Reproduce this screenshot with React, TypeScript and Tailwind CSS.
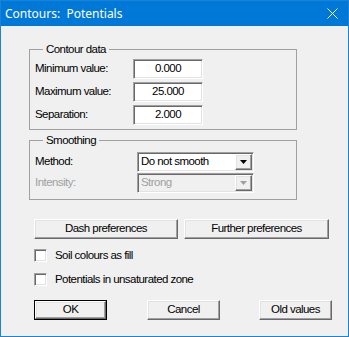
import React from 'react'

const raised =
  'bg-[#f0f0f0] border border-t-white border-l-white border-b-[#696969] border-r-[#696969] shadow-[inset_-1px_-1px_0_#a0a0a0,inset_1px_1px_0_#e3e3e3]'
const sunken =
  'border border-t-[#a0a0a0] border-l-[#a0a0a0] border-b-white border-r-white shadow-[inset_1px_1px_0_#696969,inset_-1px_-1px_0_#e3e3e3]'

function Field({ value }: { value: string }) {
  return (
    <div className={`w-[70px] h-[20px] bg-white flex items-center justify-center ${sunken}`}>
      {value}
    </div>
  )
}

function Combo({ value, disabled }: { value: string; disabled?: boolean }) {
  return (
    <div
      className={`w-[117px] h-[20px] flex items-center pl-[3px] pr-[1px] ${sunken} ${
        disabled ? 'bg-[#f0f0f0] text-[#a0a0a0]' : 'bg-white'
      }`}
    >
      <span className="flex-1">{value}</span>
      <span className={`w-[17px] h-[16px] flex items-center justify-center ${raised}`}>
        <svg width="7" height="4" viewBox="0 0 7 4">
          <path d="M0 0h7L3.5 4z" fill={disabled ? '#a0a0a0' : '#000'} />
        </svg>
      </span>
    </div>
  )
}

function Button({ label, w, primary }: { label: string; w: string; primary?: boolean }) {
  if (primary) {
    return (
      <button className={`${w} h-[20px] border border-black flex`}>
        <span className={`flex-1 flex items-center justify-center ${raised}`}>{label}</span>
      </button>
    )
  }
  return (
    <button className={`${w} h-[20px] flex items-center justify-center ${raised}`}>{label}</button>
  )
}

function Check({ label }: { label: string }) {
  return (
    <label className="flex items-center h-[13px]">
      <span className={`w-[13px] h-[13px] bg-white ${sunken}`} />
      <span className="ml-[8px]">{label}</span>
    </label>
  )
}

export default function App() {
  return (
    <div
      className="w-[349px] h-[337px] border border-[#1883d7] bg-[#f0f0f0] flex flex-col text-[11.5px] tracking-[-0.55px] text-black"
      style={{ fontFamily: '"Liberation Sans", Arial, sans-serif' }}
    >
      {/* Title bar */}
      <div className="h-[25px] bg-[#0078d7] flex items-center justify-between pl-[4px] pr-[10px] text-white">
        <span className="text-[12px] tracking-normal" style={{ fontFamily: '"Noto Sans", sans-serif' }}>
          Contours:&nbsp; Potentials
        </span>
        <svg width="11" height="11" viewBox="0 0 11 11">
          <path d="M0.5 0.5l10 10M10.5 0.5l-10 10" stroke="#fff" strokeWidth="1" />
        </svg>
      </div>

      {/* Contour data */}
      <fieldset className="ml-[28px] mt-[17px] w-[268px] border border-[#a0a0a0] pl-[5px] pt-[3px] pb-[4px]">
        <legend className="ml-[8px] px-[3px] leading-[13px]">Contour data</legend>
        <div className="flex flex-col gap-[3px]">
          {[
            { label: 'Minimum value:', value: '0.000' },
            { label: 'Maximum value:', value: '25.000' },
            { label: 'Separation:', value: '2.000' },
          ].map(({ label, value }) => (
            <div key={label} className="flex items-center">
              <span className="w-[98px]">{label}</span>
              <Field value={value} />
            </div>
          ))}
        </div>
      </fieldset>

      {/* Smoothing */}
      <fieldset className="ml-[28px] mt-[4px] w-[268px] border border-[#a0a0a0] pl-[5px] pt-[5px] pb-[6px]">
        <legend className="ml-[8px] px-[3px] leading-[13px]">Smoothing</legend>
        <div className="flex flex-col gap-[1px]">
          <div className="flex items-center">
            <span className="w-[102px]">Method:</span>
            <Combo value="Do not smooth" />
          </div>
          <div className="flex items-center">
            <span className="w-[102px] text-[#a0a0a0]">Intensity:</span>
            <Combo value="Strong" disabled />
          </div>
        </div>
      </fieldset>

      <div className="ml-[33px] mt-[19px] flex gap-[6px]">
        <Button label="Dash preferences" w="w-[144px]" />
        <Button label="Further preferences" w="w-[145px]" />
      </div>

      <div className="ml-[33px] mt-[10px]">
        <Check label="Soil colours as fill" />
      </div>
      <div className="ml-[33px] mt-[11px]">
        <Check label="Potentials in unsaturated zone" />
      </div>

      <div className="ml-[33px] mt-[14px] flex">
        <Button label="OK" w="w-[73px]" primary />
        <div className="ml-[40px]">
          <Button label="Cancel" w="w-[73px]" />
        </div>
        <div className="ml-[39px]">
          <Button label="Old values" w="w-[73px]" />
        </div>
      </div>
    </div>
  )
}
